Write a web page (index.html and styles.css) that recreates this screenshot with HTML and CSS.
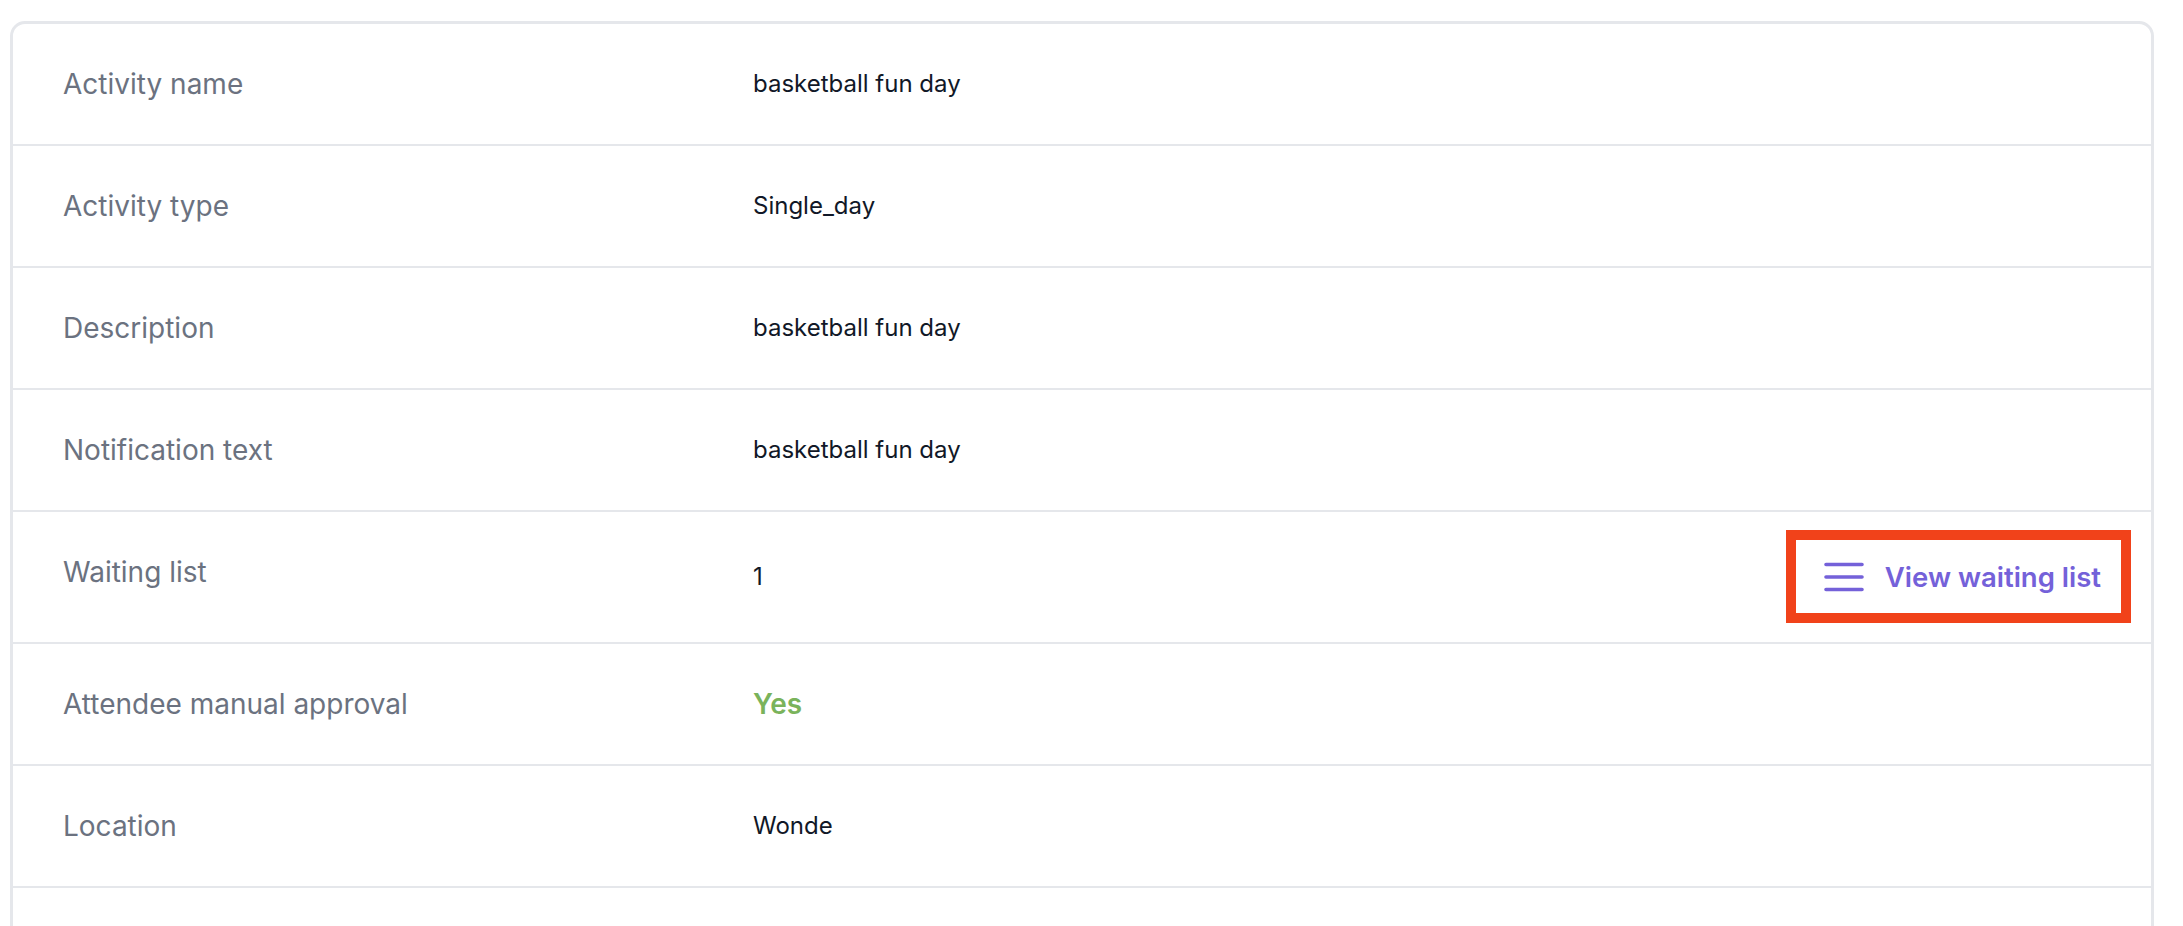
FILE: index.html
```html
<!DOCTYPE html>
<html lang="en">
<head>
<meta charset="utf-8">
<title>Activity details</title>
<link rel="stylesheet" href="styles.css">
</head>
<body>
<div class="card">
  <dl class="list">
    <div class="row">
      <dt class="label">Activity name</dt>
      <dd class="value">basketball fun day</dd>
    </div>
    <div class="row">
      <dt class="label">Activity type</dt>
      <dd class="value">Single_day</dd>
    </div>
    <div class="row">
      <dt class="label">Description</dt>
      <dd class="value">basketball fun day</dd>
    </div>
    <div class="row">
      <dt class="label">Notification text</dt>
      <dd class="value">basketball fun day</dd>
    </div>
    <div class="row">
      <dt class="label">Waiting list</dt>
      <dd class="value value-split">
        <span>1</span>
        <button class="link-btn" type="button">
          <svg class="bars" width="40" height="32" viewBox="0 0 40 32" aria-hidden="true">
            <path d="M2 3.5H38M2 16H38M2 28.5H38" fill="none" stroke="currentColor" stroke-width="3.6" stroke-linecap="round"/>
          </svg>
          <span>View waiting list</span>
          <span class="highlight"></span>
        </button>
      </dd>
    </div>
    <div class="row">
      <dt class="label">Attendee manual approval</dt>
      <dd class="value yes">Yes</dd>
    </div>
    <div class="row">
      <dt class="label">Location</dt>
      <dd class="value">Wonde</dd>
    </div>
    <div class="row">
      <dt class="label">&nbsp;</dt>
      <dd class="value">&nbsp;</dd>
    </div>
  </dl>
</div>
</body>
</html>
```

FILE: styles.css
```css
* { box-sizing: border-box; }

html, body {
  background: #ffffff;
}

body {
  margin: 0;
  padding: 21px 29px 0 10px;
  font-family: Inter, "Noto Sans", sans-serif;
  -webkit-font-smoothing: antialiased;
}

.card {
  border: 3px solid #e5e7eb;
  border-radius: 15px;
  background: #fff;
  overflow: hidden;
}

.list {
  margin: 0;
}

.row {
  display: grid;
  grid-template-columns: repeat(3, 1fr);
  column-gap: 32px;
  padding: 40px 50px;
  border-bottom: 2px solid #e5e7eb;
  align-items: start;
}

.label {
  margin: 0;
  font-size: 28px;
  line-height: 40px;
  font-weight: 400;
  color: #6b7280;
}

.value {
  margin: 0;
  grid-column: span 2;
  font-size: 24px;
  line-height: 40px;
  color: #111827;
}

.value-split {
  display: flex;
  align-items: center;
  justify-content: space-between;
  height: 50px;
}

.yes {
  color: #7ab35b;
  font-size: 28px;
  font-weight: 600;
}

.link-btn {
  position: relative;
  display: flex;
  align-items: center;
  gap: 21px;
  height: 50px;
  padding: 0;
  border: 0;
  background: none;
  font-family: inherit;
  font-size: 27.5px;
  font-weight: 600;
  color: #7461d9;
  cursor: pointer;
}

.bars {
  display: block;
  flex: none;
}

.highlight {
  position: absolute;
  top: -22px;
  bottom: -21px;
  left: -38px;
  right: -30px;
  border: 10px solid #f1421a;
  pointer-events: none;
}
```
